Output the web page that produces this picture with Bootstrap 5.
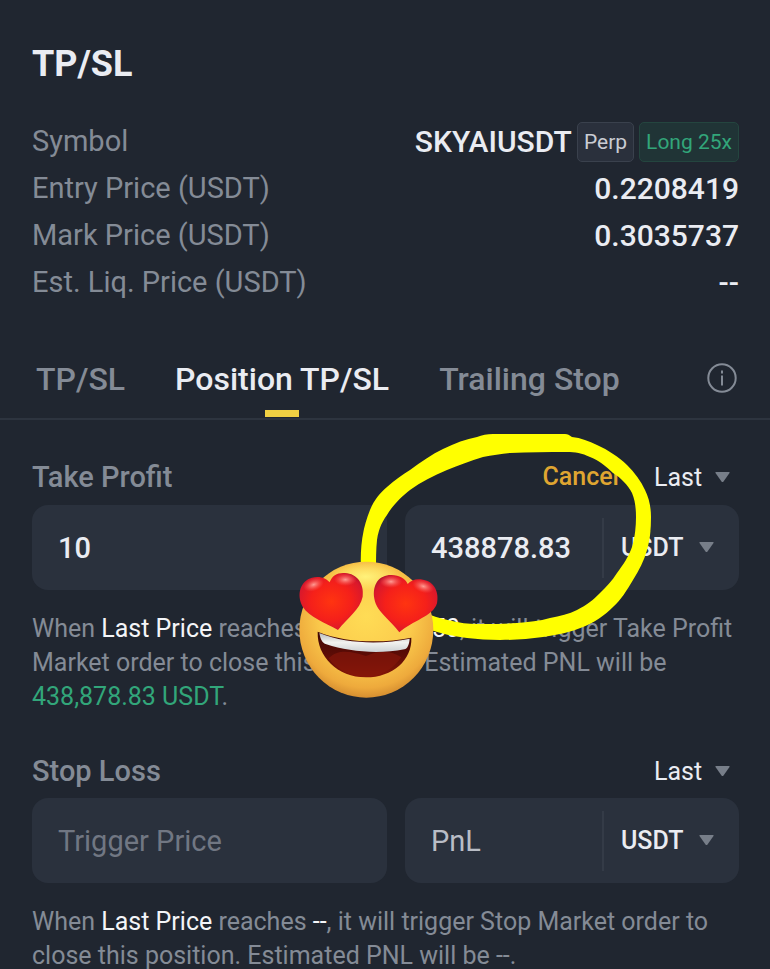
<!DOCTYPE html>
<html lang="en" data-bs-theme="dark">
<head>
<meta charset="utf-8">
<meta name="viewport" content="width=device-width, initial-scale=1">
<title>TP/SL</title>
<link href="https://cdn.jsdelivr.net/npm/bootstrap@5.3.0/dist/css/bootstrap.min.css" rel="stylesheet">
<style>
  :root { --ink: #eaecf2; --muted: #848b96; --field: #2a313d; --line: #2d343f; --profit: #32a67a; }
  body { background: #202630; color: var(--ink); font-family: Roboto, "Liberation Sans", sans-serif; font-size: 29px; line-height: 47px; overflow-x: hidden; }
  .gutter { padding-left: 32px; padding-right: 31px; }
  .page-title { font-size: 36px; line-height: 48px; font-weight: 700; color: var(--ink); padding-top: 40px; margin-bottom: 30px; }
  .muted { color: var(--muted); }
  .figures dt { font-weight: 400; }
  .figures dd { font-weight: 500; font-size: 30px; }
  .chip { font-size: 21px; line-height: 38px; font-weight: 400; padding: 0 6px; border: 1px solid #3a414d; border-radius: 5px; background: #2a303c; color: #c9ccd3; }
  .chip-long { background: #203436; border-color: #24453f; color: var(--profit); }
  .symbol-row { gap: 5px; }
  .tabs { margin-top: 43px; padding-left: 36px; padding-right: 33px; border-bottom: 2px solid var(--line); gap: 50px; }
  .tab-btn { color: var(--muted); font-size: 32px; line-height: 48px; font-weight: 500; padding: 6px 0 15px; white-space: nowrap; }
  .tab-btn.active { color: var(--ink); position: relative; }
  .tab-btn.active::after { content: ""; position: absolute; left: 50%; bottom: 1px; width: 34px; height: 7px; margin-left: -17px; background: #f0d043; }
  .order-head { height: 85px; padding-top: 27px; }
  .order-label { font-size: 29px; line-height: 60px; font-weight: 500; }
  .fields { display: grid; grid-template-columns: 355fr 334fr; gap: 18px; }
  .field { height: 85px; border-radius: 16px; background: var(--field); }
  .field input { width: 100%; min-width: 0; height: 85px; border: 0; outline: 0; background: none; color: var(--ink); font-size: 29px; font-weight: 500; padding: 0 26px; }
  .field input::placeholder { color: #717783; font-weight: 400; opacity: 1; }
  .field .bright::placeholder { color: #b9bdc6; }
  .split { height: 60px; border-left: 2px solid #343b47; }
  .pick { appearance: none; border: 0; outline: 0; color: var(--ink); font-size: 25px; background: url("data:image/svg+xml,%3Csvg xmlns='http://www.w3.org/2000/svg' width='15' height='11'%3E%3Cpath d='M1 0h13q1 0 .5 1L8.500 9.500q-1 1-2 0L.5 1Q0 0 1 0z' fill='%23777e89'/%3E%3C/svg%3E") no-repeat right center; }
  .pick-last { width: 76px; height: 60px; margin-right: 9px; }
  .pick-unit { width: 93px; height: 60px; margin: 0 25px 0 17px; font-weight: 500; flex: none; }
  .cancel { color: #dfa531; font-size: 25px; line-height: 60px; font-weight: 500; margin-right: 35px; }
  .note { font-size: 25px; line-height: 34px; color: var(--muted); padding-top: 22px; margin: 0; }
  .note b { color: #f4f5f8; font-weight: 400; }
  .note .gain { color: var(--profit); }
  .order + .order .order-head { height: 84px; }
  .sticker { position: absolute; top: 10px; right: 110px; width: 370px; height: 270px; pointer-events: none; }
</style>
</head>
<body>
<main>
  <header class="gutter">
    <h1 class="page-title">TP/SL</h1>
    <dl class="figures mb-0">
      <div class="d-flex justify-content-between align-items-center">
        <dt class="muted">Symbol</dt>
        <dd class="symbol-row d-flex align-items-center mb-0"><span>SKYAIUSDT</span><span class="chip">Perp</span><span class="chip chip-long">Long 25x</span></dd>
      </div>
      <div class="d-flex justify-content-between"><dt class="muted">Entry Price (USDT)</dt><dd class="mb-0">0.2208419</dd></div>
      <div class="d-flex justify-content-between"><dt class="muted">Mark Price (USDT)</dt><dd class="mb-0">0.3035737</dd></div>
      <div class="d-flex justify-content-between"><dt class="muted">Est. Liq. Price (USDT)</dt><dd class="mb-0">--</dd></div>
    </dl>
  </header>

  <nav class="tabs d-flex align-items-center" aria-label="Order type">
    <button type="button" class="tab-btn btn border-0 rounded-0">TP/SL</button>
    <button type="button" class="tab-btn btn border-0 rounded-0 active">Position TP/SL</button>
    <button type="button" class="tab-btn btn border-0 rounded-0">Trailing Stop</button>
    <button type="button" class="btn p-0 border-0 ms-auto d-flex mb-2 pb-1" aria-label="Information">
      <svg width="30" height="30" viewBox="0 0 30 30" fill="none" stroke="#848b96" stroke-width="2"><circle cx="15" cy="15" r="13.700"/><path d="M15 12.500V22.500M15 7.500v3"/></svg>
    </button>
  </nav>

  <section class="order gutter position-relative">
    <div class="order-head d-flex align-items-start">
      <label class="order-label muted me-auto" for="tp-price">Take Profit</label>
      <a class="cancel text-decoration-none" href="#">Cancel</a>
      <select class="pick pick-last" aria-label="Take profit price type"><option>Last</option><option>Mark</option></select>
    </div>
    <div class="fields">
      <div class="field"><input id="tp-price" type="text" value="10"></div>
      <div class="field d-flex align-items-center">
        <input type="text" value="438878.83" aria-label="Take profit PnL">
        <span class="split"></span>
        <select class="pick pick-unit" aria-label="Take profit unit"><option>USDT</option><option>%</option></select>
      </div>
    </div>
    <p class="note">When <b>Last Price</b> reaches <b>0.242945050</b>, it will trigger Take Profit Market order to close this position. Estimated PNL will be <span class="gain">438,878.83 USDT</span>.</p>

    <svg class="sticker" viewBox="290 430 370 270" aria-hidden="true">
      <defs>
        <radialGradient id="face" cx=".5" cy=".4" r=".62"><stop offset="0" stop-color="#ffdc55"/><stop offset=".55" stop-color="#fbcb4c"/><stop offset=".85" stop-color="#eeaa3c"/><stop offset="1" stop-color="#cf872d"/></radialGradient>
        <radialGradient id="glow" cx=".5" cy=".5" r=".5"><stop offset="0" stop-color="#fff27a"/><stop offset="1" stop-color="#fff27a" stop-opacity="0"/></radialGradient>
        <radialGradient id="heart" cx=".5" cy=".5" r=".65"><stop offset="0" stop-color="#ff3410"/><stop offset=".5" stop-color="#f5201a"/><stop offset=".8" stop-color="#d9182c"/><stop offset="1" stop-color="#96152c"/></radialGradient>
        <radialGradient id="shine" cx=".5" cy=".5" r=".5"><stop offset="0" stop-color="#ff9c94"/><stop offset="1" stop-color="#ff5a50" stop-opacity="0"/></radialGradient>
        <linearGradient id="mouth" x1="0" y1="0" x2="0" y2="1"><stop offset="0" stop-color="#3f0704"/><stop offset=".5" stop-color="#5c0c06"/><stop offset="1" stop-color="#861608"/></linearGradient>
        <linearGradient id="teeth" x1="0" y1="0" x2="0" y2="1"><stop offset="0" stop-color="#b9bcbb"/><stop offset=".5" stop-color="#f2f2f0"/><stop offset="1" stop-color="#cdd2d5"/></linearGradient>
      </defs>
      <path fill="#ffff00" d="M361 570C360 548 362 530 370 510C374 500 380 493 387 487C395 480 402 475 410 470C421 462 432 454 443 449C455 443 466 439 477 437C482 435 487 434 493 434H565C568 434 569 435 572 437C581 438 589 441 597 445C608 450 619 457 627 465C635 473 641 481 645 490C649 498 651 507 651 517C651 529 650 540 647 550C644 561 639 570 633 580C627 590 621 600 613 607C605 615 594 623 583 627C571 632 557 635 543 637C529 639 515 640 500 640C488 640 478 639 467 638C453 636 442 634 428 629V614C438 618 447 620 457 622C466 624 475 624 483 624C495 624 506 624 517 623C528 622 540 621 550 618C560 616 569 614 577 610C587 605 593 600 600 593C606 587 612 581 617 573C623 565 629 556 632 547C635 537 636 526 636 517C636 508 635 500 632 493C628 485 621 478 613 473C606 466 598 460 590 457C582 453 575 452 567 452C547 452 529 452 510 453C501 454 492 455 483 457C470 461 459 465 447 470C433 476 421 482 410 490C402 496 392 506 387 515C381 523 378 532 377 540C376 549 376 560 376 570Z"/>
      <g transform="translate(280 540) scale(.333333)">
        <ellipse cx="259" cy="269" rx="201" ry="204" fill="url(#face)"/>
        <ellipse cx="257" cy="110" rx="105" ry="42" fill="url(#glow)"/>
        <path d="M113 275C200 310 310 310 394 293C397 360 338 412 258 412C172 411 111 350 113 275Z" fill="url(#mouth)"/>
        <path d="M146 355C174 326 214 334 258 348C296 331 329 330 364 352C338 389 301 410 258 411C212 411 172 390 146 355Z" fill="#85170a" opacity=".65"/>
        <path d="M118 279C200 313 310 313 389 296C388 312 383 326 373 328C294 343 205 335 139 313C126 309 121 296 118 279Z" fill="url(#teeth)"/>
        <path d="M174 270C135 247 88 232 68 200C48 162 62 122 96 113C118 107 139 114 149 127C156 105 174 97 195 99C232 101 253 132 248 170C241 208 201 235 174 270Z" fill="url(#heart)"/>
        <path d="M358 277C335 242 290 217 283 176C276 131 299 104 335 105C358 106 376 115 383 132C393 120 410 115 429 119C463 124 478 157 471 190C459 230 397 242 358 277Z" fill="url(#heart)"/>
        <ellipse cx="101" cy="134" rx="32" ry="19" transform="rotate(-20 101 134)" fill="url(#shine)"/>
        <ellipse cx="196" cy="119" rx="34" ry="19" fill="url(#shine)"/>
        <ellipse cx="333" cy="125" rx="34" ry="19" fill="url(#shine)"/>
        <ellipse cx="430" cy="139" rx="33" ry="19" transform="rotate(18 430 139)" fill="url(#shine)"/>
      </g>
    </svg>
  </section>

  <section class="order gutter">
    <div class="order-head d-flex align-items-start">
      <label class="order-label muted me-auto" for="sl-price">Stop Loss</label>
      <select class="pick pick-last" aria-label="Stop loss price type"><option>Last</option><option>Mark</option></select>
    </div>
    <div class="fields">
      <div class="field"><input id="sl-price" type="text" placeholder="Trigger Price"></div>
      <div class="field d-flex align-items-center">
        <input class="bright" type="text" placeholder="PnL" aria-label="Stop loss PnL">
        <span class="split"></span>
        <select class="pick pick-unit" aria-label="Stop loss unit"><option>USDT</option><option>%</option></select>
      </div>
    </div>
    <p class="note">When <b>Last Price</b> reaches <b>--</b>, it will trigger Stop Market order to close this position. Estimated PNL will be --.</p>
  </section>
</main>
<script src="https://cdn.jsdelivr.net/npm/bootstrap@5.3.0/dist/js/bootstrap.bundle.min.js"></script>
</body>
</html>
